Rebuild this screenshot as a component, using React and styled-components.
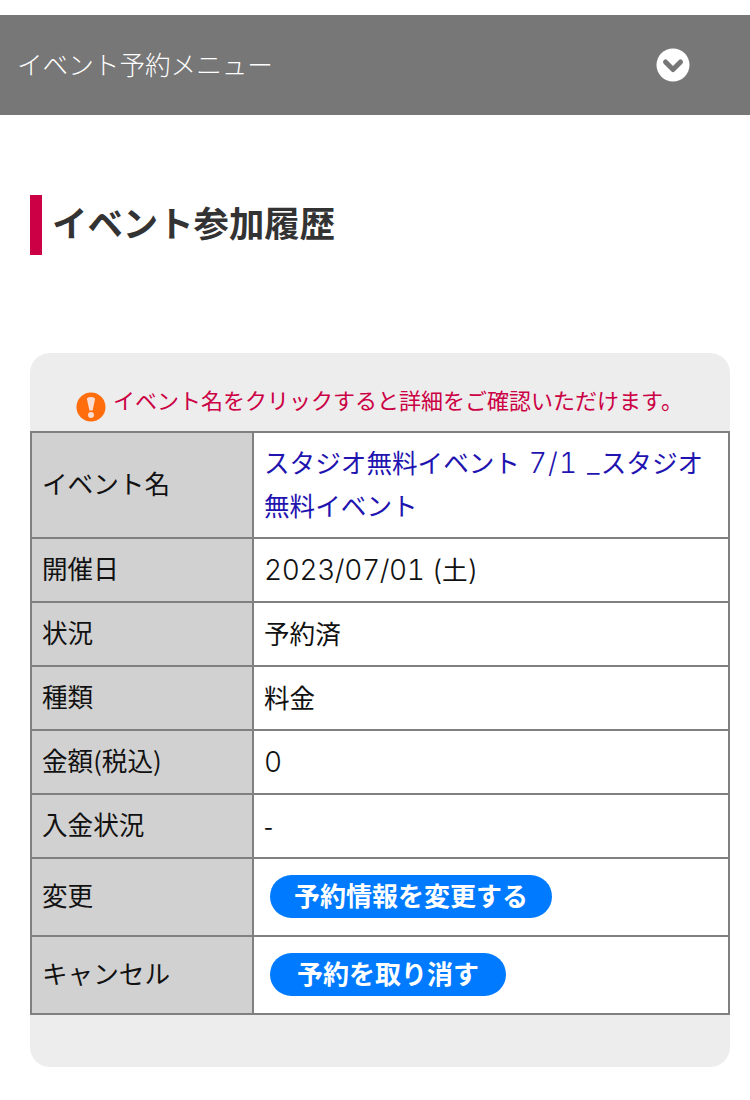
import React from "react";
import styled, { createGlobalStyle } from "styled-components";

const Latin = styled.span`
  font-family: Inter, sans-serif;
  font-size: 28px;
  font-weight: 300;
  line-height: 1;
  letter-spacing: ${(props) => props.$spacing || 0}px;
  font-variant-numeric: tabular-nums;
`;

const rows = [
  {
    label: "開催日",
    value: (
      <>
        <Latin $spacing={-0.4}>2023/07/01 (</Latin>土<Latin>)</Latin>
      </>
    ),
  },
  { label: "状況", value: "予約済" },
  { label: "種類", value: "料金" },
  { label: "金額(税込)", value: <Latin>0</Latin> },
  { label: "入金状況", value: "-" },
];

const App = () => (
  <Page>
    <GlobalStyle />
    <MenuBar>
      <MenuTitle>イベント予約メニュー</MenuTitle>
      <ChevronIcon />
    </MenuBar>
    <Heading>イベント参加履歴</Heading>
    <Card>
      <Notice>
        <AlertIcon />
        <span>イベント名をクリックすると詳細をご確認いただけます。</span>
      </Notice>
      <Table>
        <colgroup>
          <col width="222" />
          <col />
        </colgroup>
        <tbody>
          <Row $height={106}>
            <Th>イベント名</Th>
            <Td>
              <EventLink href="#">
                スタジオ無料イベント<Latin $spacing={1.2}> 7/1 _</Latin>スタジオ無料イベント
              </EventLink>
            </Td>
          </Row>
          {rows.map((row) => (
            <Row key={row.label} $height={64}>
              <Th>{row.label}</Th>
              <Td>{row.value}</Td>
            </Row>
          ))}
          <Row $height={78}>
            <Th>変更</Th>
            <Td>
              <PillButton $width={282}>予約情報を変更する</PillButton>
            </Td>
          </Row>
          <Row $height={78}>
            <Th>キャンセル</Th>
            <Td>
              <PillButton $width={236}>予約を取り消す</PillButton>
            </Td>
          </Row>
        </tbody>
      </Table>
    </Card>
  </Page>
);

export default App;

const ChevronIcon = () => (
  <svg width="34" height="34" viewBox="0 0 34 34">
    <circle cx="17" cy="17" r="16.5" fill="#fff" />
    <path
      d="M9.5 14 L17 21.5 L24.5 14"
      fill="none"
      stroke="#777"
      strokeWidth="5"
      strokeLinecap="round"
      strokeLinejoin="round"
    />
  </svg>
);

const AlertIcon = () => (
  <AlertSvg width="30" height="30" viewBox="0 0 30 30">
    <circle cx="15" cy="15" r="14.5" fill="#ff6d0d" />
    <path d="M10.8 6.5 Q15 3.6 19.2 6.5 L16.6 18.5 L13.4 18.5 Z" fill="#fbdcd0" />
    <circle cx="15" cy="23" r="3" fill="#fbdcd0" />
  </AlertSvg>
);

const GlobalStyle = createGlobalStyle`
  html, body {
    margin: 0;
    padding: 0;
    background: #fff;
  }
  body {
    font-family: "Noto Sans CJK JP", "Noto Sans", sans-serif;
    color: #000;
  }
`;

const Page = styled.div`
  width: 750px;
  padding: 15px 0 33px;
  box-sizing: border-box;
`;

const MenuBar = styled.div`
  display: flex;
  align-items: center;
  justify-content: space-between;
  height: 100px;
  padding: 0 60px 0 18px;
  box-sizing: border-box;
  background: #777;
`;

const MenuTitle = styled.div`
  margin: 0 0 3px -1px;
  font-size: 25.6px;
  font-weight: 300;
  color: #fff;
`;

const Heading = styled.h2`
  margin: 80px 0 98px 30px;
  height: 60px;
  padding-left: 10px;
  border-left: 12px solid #cc0044;
  font-size: 35.4px;
  font-weight: 700;
  line-height: 53px;
  color: #333;
`;

const Card = styled.div`
  margin: 0 20px 0 30px;
  padding-bottom: 52px;
  border-radius: 20px;
  background: #ededed;
`;

const Notice = styled.div`
  display: flex;
  align-items: flex-start;
  justify-content: center;
  gap: 7px;
  height: 78px;
  padding: 31px 1px 0 0;
  box-sizing: border-box;
  font-size: 22px;
  line-height: 30px;
  color: #cc0044;
`;

const AlertSvg = styled.svg`
  flex: none;
  margin-top: 8px;
`;

const Table = styled.table`
  width: 700px;
  table-layout: fixed;
  border-collapse: collapse;
  background: #fff;
  border: 2px solid #808080;
  font-size: 25.6px;
`;

const Row = styled.tr`
  height: ${(props) => props.$height}px;
`;

const Th = styled.th`
  padding: 0 10px 5px;
  border: 2px solid #808080;
  background: #d1d1d1;
  font-weight: 400;
  text-align: left;
  color: #111;
`;

const Td = styled.td`
  padding: 0 16px 4px 10px;
  border: 2px solid #808080;
  line-height: 43px;
  color: #111;
`;

const EventLink = styled.a`
  color: #1f14b0;
  text-decoration: none;
`;

const PillButton = styled.button`
  display: block;
  width: ${(props) => props.$width}px;
  height: 43px;
  margin: 0 0 -2px 6px;
  padding: 0 0 4px;
  border: none;
  border-radius: 22px;
  background: #007bff;
  font-family: "Noto Sans CJK JP", sans-serif;
  font-size: 26px;
  font-weight: 700;
  line-height: 39px;
  text-align: center;
  color: #fff;
`;
